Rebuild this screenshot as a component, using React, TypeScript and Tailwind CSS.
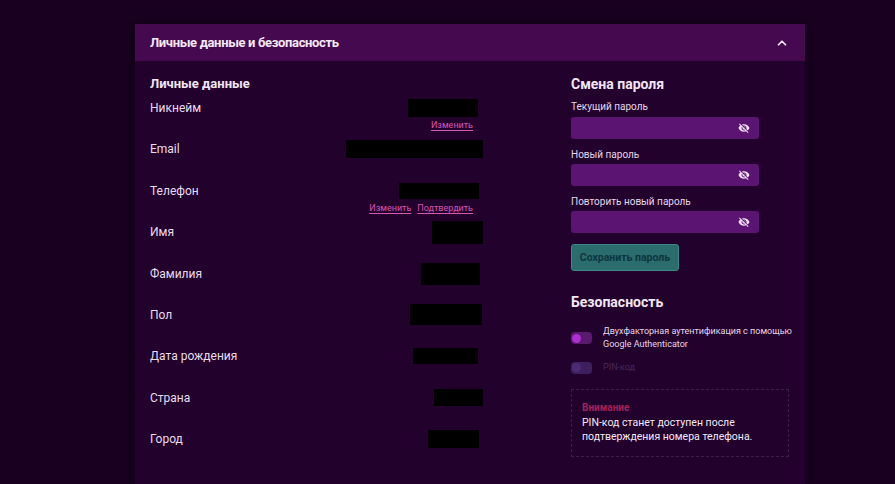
import { ChevronUp } from "lucide-react";
import { MdVisibilityOff } from "react-icons/md";

// one row of personal data: label on the left, hidden value box on the right
type Row = {
  label: string;
  w: string; // width class of the hidden value
  h: string; // height class of the hidden value
  mr: string; // right offset
  links?: string[];
};

const rows: Row[] = [
  { label: "Никнейм", w: "w-[70px]", h: "h-[18px]", mr: "mr-[5px]", links: ["Изменить"] },
  { label: "Email", w: "w-[137px]", h: "h-[18px]", mr: "mr-0" },
  { label: "Телефон", w: "w-[80px]", h: "h-[16px]", mr: "mr-[4px]", links: ["Изменить", "Подтвердить"] },
  { label: "Имя", w: "w-[51px]", h: "h-[23px]", mr: "mr-0" },
  { label: "Фамилия", w: "w-[59px]", h: "h-[22px]", mr: "mr-[3px]" },
  { label: "Пол", w: "w-[72px]", h: "h-[21px]", mr: "mr-[1px]" },
  { label: "Дата рождения", w: "w-[65px]", h: "h-[16px]", mr: "mr-[5px]" },
  { label: "Страна", w: "w-[49px]", h: "h-[17px]", mr: "mr-0" },
  { label: "Город", w: "w-[51px]", h: "h-[18px]", mr: "mr-[4px]" },
];

const passwordFields = ["Текущий пароль", "Новый пароль", "Повторить новый пароль"];

function PasswordInput({ label, first }: { label: string; first?: boolean }) {
  return (
    <div className={first ? "mt-[6px]" : "mt-[9px]"}>
      <div className="text-[10px] leading-[14px] text-[#e6d8ea]">{label}</div>
      <div className={`${first ? "mt-[3px]" : "mt-[2px]"} h-[22px] w-[188px] rounded-[3px] bg-[#5c1472] flex items-center justify-end pr-[9px]`}>
        <MdVisibilityOff size={12} className="text-[#f3e3f6]" />
      </div>
    </div>
  );
}

export default function App() {
  return (
    <div
      className="min-h-[484px] bg-[#190021] pt-[24px]"
      style={{ fontFamily: "Roboto, 'Noto Sans', sans-serif" }}
    >
      {/* panel */}
      <div className="ml-[135px] w-[670px] h-[460px] bg-[#22012c] shadow-[0_0_12px_rgba(0,0,0,0.5)]">
        {/* header */}
        <div className="h-[37px] bg-[#45094f] flex items-center justify-between pl-[15px] pr-[16px]">
          <span className="text-[13px] font-bold tracking-[-0.35px] text-[#f4e8f6]">
            Личные данные и безопасность
          </span>
          <ChevronUp size={14} strokeWidth={3} className="text-[#f4e8f6]" />
        </div>

        {/* body */}
        <div className="flex pl-[15px] pt-[13px]">
          {/* left column */}
          <div className="w-[333px]">
            <div className="text-[13px] leading-[20px] font-bold text-[#f2e6f4]">Личные данные</div>
            <div className="mt-[5px]">
              {rows.map((r) => (
                <div key={r.label} className="h-[41.4px]">
                  <div className="h-[18px] flex items-center justify-between">
                    <span className="text-[12px] text-[#e8dcec]">{r.label}</span>
                    <div className={`${r.w} ${r.h} ${r.mr} bg-black`} />
                  </div>
                  {r.links && (
                    <div className="flex justify-end gap-[6px] pr-[10px] text-[9px] leading-[16px] text-[#d955b4]">
                      {r.links.map((l) => (
                        <span key={l} className="underline underline-offset-2">{l}</span>
                      ))}
                    </div>
                  )}
                </div>
              ))}
            </div>
          </div>

          {/* right column */}
          <div className="ml-[88px] w-[218px]">
            <div className="text-[14px] leading-[20px] font-bold text-[#f2e6f4]">Смена пароля</div>
            {passwordFields.map((f, i) => (
              <PasswordInput key={f} label={f} first={i === 0} />
            ))}
            <button className="mt-[11px] h-[27px] w-[108px] rounded-[3px] border border-[#3a8a88] bg-[#2b6c6e] text-[10.5px] font-bold text-[#0d3640]">
              Сохранить пароль
            </button>

            <div className="mt-[21px] text-[14px] leading-[20px] font-bold text-[#f2e6f4]">Безопасность</div>

            {/* toggles */}
            <div className="mt-[13px] flex items-center gap-[11px]">
              <div className="h-[12px] w-[21px] rounded-[4px] bg-[#5a1a6e] flex items-center pl-[1px] shrink-0">
                <div className="h-[9px] w-[9px] rounded-full bg-[#b02fd2]" />
              </div>
              <div className="text-[9px] leading-[13px] whitespace-nowrap text-[#e6d8ea]">
                Двухфакторная аутентификация с помощью
                <br />
                Google Authenticator
              </div>
            </div>
            <div className="mt-[10px] flex items-center gap-[11px]">
              <div className="h-[12px] w-[21px] rounded-[4px] bg-[#3d1f5e] flex items-center pl-[1px] shrink-0">
                <div className="h-[9px] w-[9px] rounded-full bg-[#4e2b75]" />
              </div>
              <div className="text-[9px] leading-[13px] text-[#4c2a5a]">PIN-код</div>
            </div>

            {/* notice */}
            <div className="mt-[15px] border border-dashed border-[#3e1d4a] px-[10px] pt-[11px] pb-[12px]">
              <div className="text-[10px] leading-[13px] font-bold text-[#a3215d]">Внимание</div>
              <div className="mt-[2px] text-[10.5px] leading-[14px] text-[#f3eaf5]">
                PIN-код станет доступен после
                <br />
                подтверждения номера телефона.
              </div>
            </div>
          </div>
        </div>
      </div>
    </div>
  );
}
